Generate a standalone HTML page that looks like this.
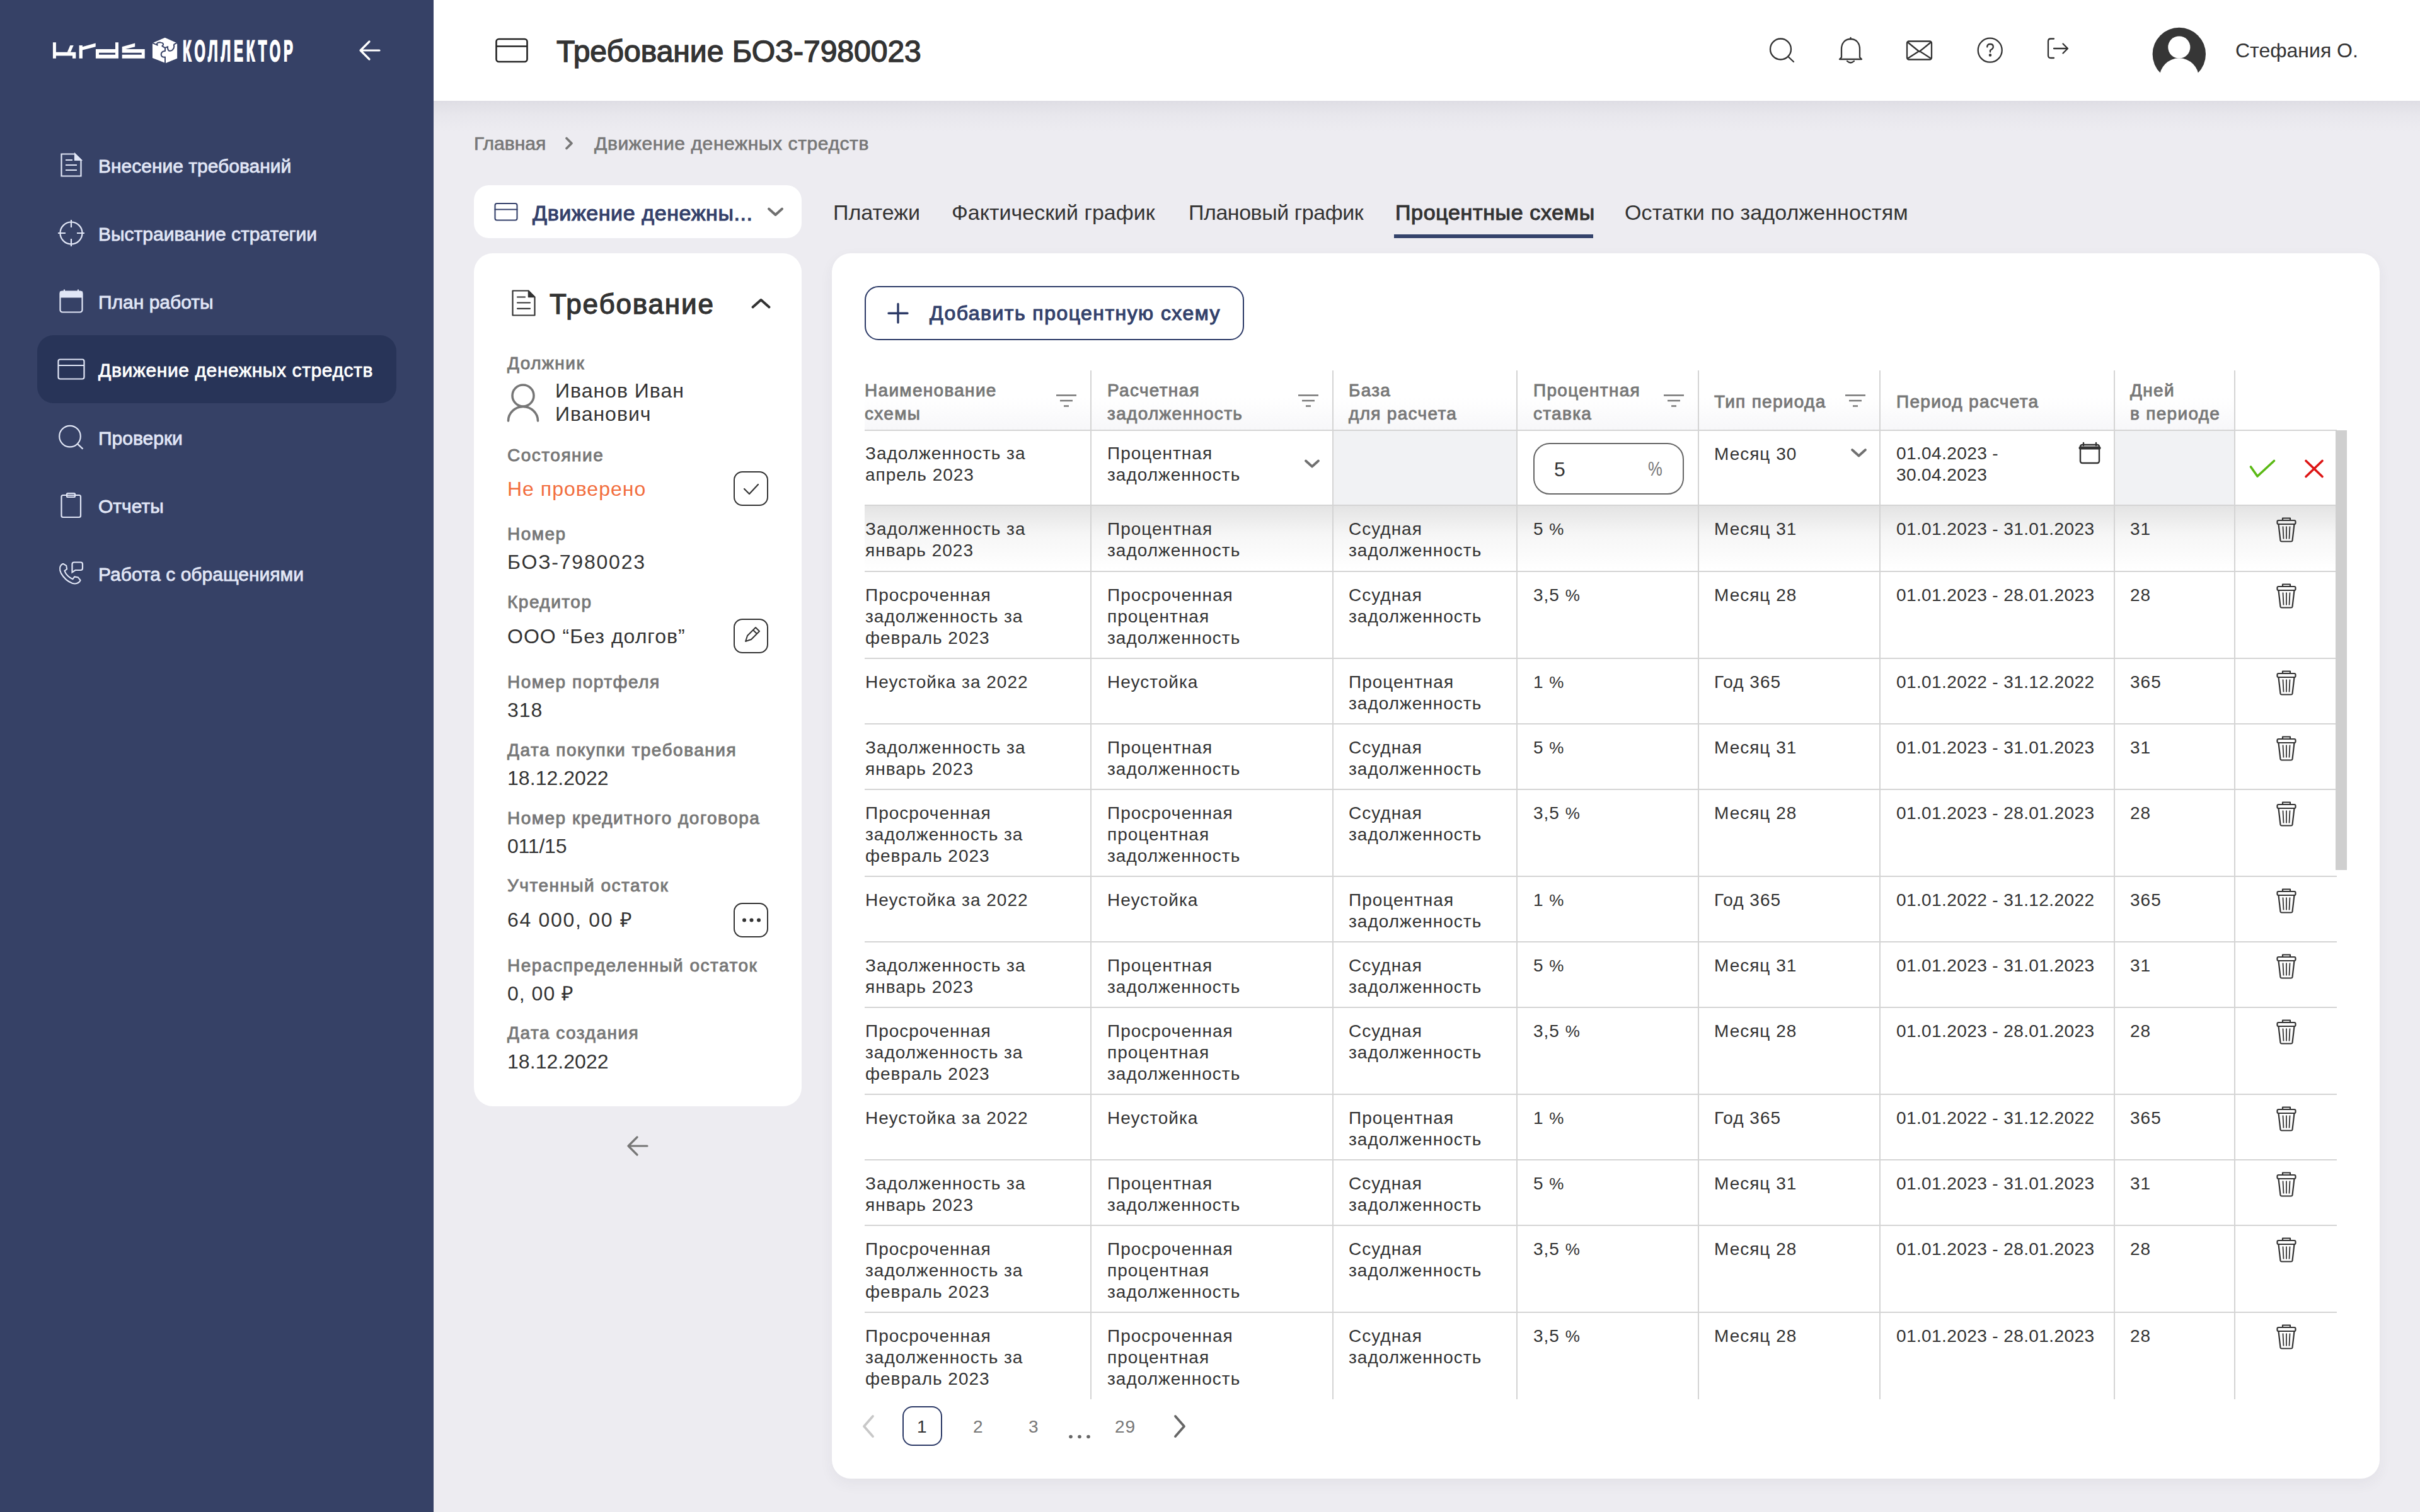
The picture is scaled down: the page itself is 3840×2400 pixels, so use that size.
<!DOCTYPE html><html><head><meta charset="utf-8"><style>
*{margin:0;padding:0;box-sizing:border-box}
html,body{width:3840px;height:2400px;overflow:hidden;background:#edecf1;font-family:"Liberation Sans",sans-serif;color:#333}
.t{position:absolute;white-space:nowrap}
.a{position:absolute}
#side{position:absolute;left:0;top:0;width:688px;height:2400px;background:#364166}
#hdr{position:absolute;left:688px;top:0;width:3152px;height:160px;background:#fff;}
.menu{color:#e1e6f6;-webkit-text-stroke:.8px #e1e6f6}
.act{position:absolute;left:59px;top:532px;width:570px;height:108px;border-radius:26px;background:#283458}
.card{position:absolute;background:#fff;border-radius:30px}
.lbl{color:#777;font-weight:normal;-webkit-text-stroke:.9px #777;letter-spacing:1.5px}
.val{color:#333;letter-spacing:1px}
.ib{position:absolute;width:55px;height:55px;border:2px solid #333;border-radius:14px}
.tab{color:#333}
.hd{color:#777;font-weight:normal;-webkit-text-stroke:.9px #777;letter-spacing:1.3px}
.cell{color:#333;letter-spacing:1px}
.vl{position:absolute;width:2px;background:#d4d4d4}
.hl{position:absolute;height:2px;background:#d4d4d4}
svg{position:absolute;overflow:visible}
@media (max-width:2600px){html{zoom:.5}}
</style></head><body>
<div id="side">
<svg style="left:0;top:0" width="688" height="160" viewBox="0 0 688 160">
<g transform="translate(78,55) scale(0.066116)" fill="#fff">
<path d="M90 185H165V420H640V570H560V505H165V570H90Z"/>
<path d="M435 420H515L585 258H505Z"/>
<path d="M720 258H800V290L1115 205V290L800 372V570H720Z"/>
<path d="M1590 185H1663V570H1118V348H1588V435H1195V480H1588V185Z" fill-rule="evenodd"/>
<path d="M1750 290L2060 205V290L1830 348H2295V570H1750V480H2220V435H1750Z"/>
</g>
<g transform="translate(236,55) scale(0.099177)" fill="#fff">
<path d="M260 48L440 128L455 150V380L270 455L60 372V150L78 125Z"/>
</g>
<g transform="translate(236,55) scale(0.099177)" fill="none" stroke="#364166" stroke-width="20" stroke-linejoin="round">
<path d="M70 138L140 168Q118 140 150 128Q190 118 225 138Q245 160 215 182Q230 196 262 210L305 192Q295 225 320 255Q350 268 380 245Q410 215 405 178Q395 160 420 148L445 135"/>
<path d="M262 210V262Q225 262 205 290Q188 330 215 352Q235 366 262 358V460"/>
</g>
<text transform="translate(290,97) scale(0.475,1)" x="0" y="0" fill="#fff" font-family="Liberation Sans" font-weight="bold" font-size="47" textLength="368" lengthAdjust="spacing" stroke="#fff" stroke-width="2.2" style="text-rendering:geometricPrecision">КОЛЛЕКТОР</text>
<path d="M602 80H572M586 66L572 80L586 94" stroke="#fff" stroke-width="3.2" fill="none" stroke-linecap="round" stroke-linejoin="round"/>
</svg>
<div class="act"></div>
<div class="t menu" style="left:156px;top:245.6px;font-size:30px;line-height:36px;">Внесение требований</div>
<div class="t menu" style="left:156px;top:353.6px;font-size:30px;line-height:36px;">Выстраивание стратегии</div>
<div class="t menu" style="left:156px;top:461.6px;font-size:30px;line-height:36px;">План работы</div>
<div class="t menu" style="left:156px;top:569.6px;font-size:30px;line-height:36px;color:#fff;-webkit-text-stroke:.8px #fff;letter-spacing:.6px">Движение денежных стредств</div>
<div class="t menu" style="left:156px;top:677.6px;font-size:30px;line-height:36px;">Проверки</div>
<div class="t menu" style="left:156px;top:785.6px;font-size:30px;line-height:36px;">Отчеты</div>
<div class="t menu" style="left:156px;top:893.6px;font-size:30px;line-height:36px;">Работа с обращениями</div>
<svg style="left:0;top:0" width="688" height="1000" viewBox="0 0 688 1000" fill="none" stroke="#e1e6f6" stroke-width="2.2">
<path d="M97.5 244.5H119L128.5 254V279.5H97.5Z"/><path d="M119 244.5L128.5 254H119Z" fill="#e1e6f6"/><path d="M104 254H115M104 262H122M104 270H122"/>
<circle cx="113" cy="370" r="17.5"/><path d="M113 349V361M113 379V391M92 370H104M122 370H134"/>
<rect x="95.5" y="462.5" width="35" height="33" rx="3.5"/><path d="M96 463.5H130V471.5H96Z" fill="#e1e6f6"/><path d="M102 459.5V463M124 459.5V463"/>
<rect x="92.5" y="570.5" width="41" height="31" rx="3"/><path d="M92.5 580H133.5"/>
<circle cx="111" cy="692.6" r="16.8"/><path d="M123 704.6L131.5 712.6"/>
<rect x="97.5" y="786" width="30.5" height="35" rx="2.5"/><rect x="106" y="783" width="13" height="6" rx="1.5"/>
<g transform="translate(95,895) scale(0.93) translate(-95,-895)"><path d="M100 895C94 898 94 905 97 911C101 918 108 925 116 928C122 930 128 928 130 923L126 918L120 917L117 921C111 919 105 913 103 907L107 904L106 898L101 895Z"/></g><path d="M117.5 892.5H128Q131 892.5 131 895.5V902Q131 905 128 905H119.5L114.5 908.5V895.5Q114.5 892.5 117.5 892.5Z"/>
</svg>
</div>
<div id="hdr"></div>
<div class="a" style="left:688px;top:160px;width:3152px;height:50px;background:linear-gradient(rgba(20,20,50,.065),rgba(20,20,50,.025) 45%,rgba(20,20,50,0))"></div>
<svg style="left:0;top:0" width="3840" height="160" viewBox="0 0 3840 160" fill="none" stroke="#222" stroke-width="2.6">
<rect x="787.5" y="62" width="49" height="36" rx="4"/><path d="M787.5 73.5H836.5"/>
</svg>
<div class="t " style="left:883px;top:53.4px;font-size:48px;line-height:58px;color:#333;-webkit-text-stroke:1.4px #333">Требование БОЗ-7980023</div>
<svg style="left:0;top:0" width="3840" height="160" viewBox="0 0 3840 160" fill="none" stroke="#333" stroke-width="2.3" stroke-linecap="round" stroke-linejoin="round">
<circle cx="2825.5" cy="78" r="16.5"/><path d="M2838 90.5L2846 98"/>
<path d="M2936.5 62C2927 62 2922 69 2922 78V91L2919 94H2954L2951 91V78C2951 69 2946 62 2936.5 62Z"/><path d="M2936.5 60V62"/><path d="M2931 97Q2936.5 102 2942 97"/>
<rect x="3026" y="65.5" width="39" height="29" rx="3"/><path d="M3027 67L3045.5 82L3064 67M3027.5 92.5L3043 82.5M3063.5 92.5L3048 82.5"/>
<circle cx="3157.7" cy="79.7" r="19"/><path d="M3153.2 74.5Q3153.2 70 3158 70Q3162.8 70 3162.8 74.3Q3162.8 77.5 3158 79.8V82.5"/><circle cx="3158" cy="87.5" r="1.1" fill="#333"/>
<path d="M3259 61.5H3254Q3250 61.5 3250 65.5V88Q3250 92 3254 92H3259"/><path d="M3259 77H3281M3273.5 69.5L3281 77L3273.5 84.5"/>
</svg>
<svg style="left:0;top:0" width="3840" height="160" viewBox="0 0 3840 160">
<defs><clipPath id="avc"><circle cx="3457.8" cy="86" r="42.2"/></clipPath></defs>
<circle cx="3457.8" cy="86" r="42.2" fill="#363636"/>
<circle cx="3457.8" cy="75" r="17.6" fill="#fff"/><circle cx="3457.8" cy="123.5" r="31.2" fill="#fff"/><rect x="3410" y="129" width="96" height="20" fill="#fff"/>
</svg>
<div class="t " style="left:3547px;top:60.9px;font-size:32px;line-height:38px;color:#333">Стефания О.</div>
<div class="t lbl" style="left:752px;top:209.9px;font-size:30px;line-height:36px;font-weight:normal;-webkit-text-stroke:.7px #777;letter-spacing:0">Главная</div>
<svg style="left:0;top:0" width="3840" height="400" viewBox="0 0 3840 400" fill="none" stroke="#777" stroke-width="2.8" stroke-linecap="round" stroke-linejoin="round">
<path d="M899 219.5L907 227.5L899 235.5" stroke-width="3.8"/></svg>
<div class="t lbl" style="left:943px;top:209.9px;font-size:30px;line-height:36px;font-weight:normal;-webkit-text-stroke:.7px #777;letter-spacing:.6px">Движение денежных стредств</div>
<div class="card" style="left:752px;top:294px;width:520px;height:84px;border-radius:24px"></div>
<svg style="left:0;top:0" width="3840" height="400" viewBox="0 0 3840 400" fill="none" stroke="#34406a" stroke-width="2.1" stroke-linecap="round" stroke-linejoin="round">
<rect x="785.5" y="323" width="35" height="26.5" rx="3"/><path d="M785.5 332.5H820.5"/>
<path d="M1220 331.5L1230.5 341L1241 331.5" stroke="#707070" stroke-width="4"/></svg>
<div class="t " style="left:845px;top:317.7px;font-size:34px;line-height:41px;color:#34406a;-webkit-text-stroke:1.1px #34406a;letter-spacing:.6px">Движение денежны...</div>
<div class="t " style="left:1322px;top:316.7px;font-size:34px;line-height:41px;color:#333;letter-spacing:0px">Платежи</div>
<div class="t " style="left:1510px;top:316.7px;font-size:34px;line-height:41px;color:#333;letter-spacing:0px">Фактический график</div>
<div class="t " style="left:1886px;top:316.7px;font-size:34px;line-height:41px;color:#333;letter-spacing:-0.45px">Плановый график</div>
<div class="t " style="left:2214px;top:316.7px;font-size:34px;line-height:41px;color:#333;-webkit-text-stroke:1.1px #333;letter-spacing:0.65px">Процентные схемы</div>
<div class="t " style="left:2578px;top:316.7px;font-size:34px;line-height:41px;color:#333;letter-spacing:0.1px">Остатки по задолженностям</div>
<div class="a" style="left:2212px;top:372px;width:316px;height:6px;background:#34436b"></div>
<div class="card" style="left:752px;top:402px;width:520px;height:1354px"></div>
<svg style="left:0;top:0" width="3840" height="2400" viewBox="0 0 3840 2400" fill="none" stroke="#333" stroke-width="2.4" stroke-linecap="round" stroke-linejoin="round">
<path d="M813.5 461.5H838.5L848.5 471.5V500.5H813.5Z" stroke-width="2.2"/><path d="M838.5 461.5L848.5 471.5H838.5Z" fill="#333" stroke-width="1.5"/><path d="M821 471.5H833M821 480.5H841M821 489.8H841" stroke-width="2.2"/>
<path d="M1194.5 487.5L1207.5 476L1220.5 487.5" stroke-width="4"/>
<circle cx="830" cy="628" r="17" stroke="#777" stroke-width="3.6"/><path d="M806.5 668A23.5 22.5 0 0 1 853.5 668" stroke="#777" stroke-width="3.6"/>
<path d="M1181 776L1189 784L1203 769" stroke-width="2.2"/>
<path d="M1183 1018L1186 1009L1199 996L1205 1002L1192 1015Z M1195 1000L1201 1006" stroke-width="2"/>
<circle cx="1181" cy="1460.5" r="3" fill="#333" stroke="none"/><circle cx="1192.5" cy="1460.5" r="3" fill="#333" stroke="none"/><circle cx="1204" cy="1460.5" r="3" fill="#333" stroke="none"/>
<path d="M1027 1819H997M1011 1805L997 1819L1011 1833" stroke="#777" stroke-width="3.2"/>
</svg>
<div class="t " style="left:872px;top:456.3px;font-size:44px;line-height:53px;color:#333;-webkit-text-stroke:1.3px #333;letter-spacing:1.85px">Требование</div>
<div class="ib" style="left:1164px;top:748px"></div>
<div class="ib" style="left:1164px;top:982px"></div>
<div class="ib" style="left:1164px;top:1433px"></div>
<div class="t lbl" style="left:805px;top:560.3px;font-size:28px;line-height:34px;">Должник</div>
<div class="t val" style="left:881px;top:602.4px;font-size:32px;line-height:37px;">Иванов Иван<br>Иванович</div>
<div class="t lbl" style="left:805px;top:706.3px;font-size:28px;line-height:34px;">Состояние</div>
<div class="t val" style="left:805px;top:756.9px;font-size:32px;line-height:38px;color:#f26d3d">Не проверено</div>
<div class="t lbl" style="left:805px;top:831.3px;font-size:28px;line-height:34px;">Номер</div>
<div class="t val" style="left:805px;top:872.9px;font-size:32px;line-height:38px;color:#333;letter-spacing:1.8px">БОЗ-7980023</div>
<div class="t lbl" style="left:805px;top:939.3px;font-size:28px;line-height:34px;">Кредитор</div>
<div class="t val" style="left:805px;top:990.9px;font-size:32px;line-height:38px;color:#333">ООО “Без долгов”</div>
<div class="t lbl" style="left:805px;top:1066.3px;font-size:28px;line-height:34px;">Номер портфеля</div>
<div class="t val" style="left:805px;top:1107.9px;font-size:32px;line-height:38px;color:#333">318</div>
<div class="t lbl" style="left:805px;top:1173.8px;font-size:28px;line-height:34px;">Дата покупки требования</div>
<div class="t val" style="left:805px;top:1215.9px;font-size:32px;line-height:38px;color:#333;letter-spacing:0.05px">18.12.2022</div>
<div class="t lbl" style="left:805px;top:1282.3px;font-size:28px;line-height:34px;">Номер кредитного договора</div>
<div class="t val" style="left:805px;top:1323.9px;font-size:32px;line-height:38px;color:#333;letter-spacing:-0.2px">011/15</div>
<div class="t lbl" style="left:805px;top:1388.9px;font-size:28px;line-height:34px;">Учтенный остаток</div>
<div class="t val" style="left:805px;top:1440.9px;font-size:32px;line-height:38px;color:#333;letter-spacing:1.7px">64 000, 00 ₽</div>
<div class="t lbl" style="left:805px;top:1515.8px;font-size:28px;line-height:34px;">Нераспределенный остаток</div>
<div class="t val" style="left:805px;top:1557.9px;font-size:32px;line-height:38px;color:#333">0, 00 ₽</div>
<div class="t lbl" style="left:805px;top:1623.3px;font-size:28px;line-height:34px;">Дата создания</div>
<div class="t val" style="left:805px;top:1665.9px;font-size:32px;line-height:38px;color:#333;letter-spacing:0.05px">18.12.2022</div>
<div class="card" style="left:1320px;top:402px;width:2456px;height:1945px;box-shadow:0 8px 22px rgba(50,50,80,.055)"></div>
<div class="a" style="left:1372px;top:454px;width:602px;height:86px;border:2px solid #2b3966;border-radius:22px"></div>
<svg style="left:0;top:0" width="3840" height="600" viewBox="0 0 3840 600" fill="none" stroke="#2b3966" stroke-width="2.8" stroke-linecap="round">
<path d="M1425 482.5V512M1410 497.2H1440" stroke-width="3.4"/></svg>
<div class="t " style="left:1475px;top:477.9px;font-size:32px;line-height:38px;color:#33416b;-webkit-text-stroke:1.1px #33416b;letter-spacing:1.45px">Добавить процентную схему</div>
<div class="a" style="left:1372px;top:588px;width:2174px;height:95px;background:linear-gradient(#fff 45%,#f7f7f9)"></div>
<div class="t hd" style="left:1372px;top:600.8px;font-size:28px;line-height:37px;">Наименование<br>схемы</div>
<svg style="left:0;top:0" width="3840" height="700" viewBox="0 0 3840 700" fill="none" stroke="#777" stroke-width="2.6"><path d="M1676 627.5H1708M1682 636H1702M1688 644.5H1696"/></svg>
<div class="t hd" style="left:1757px;top:600.8px;font-size:28px;line-height:37px;">Расчетная<br>задолженность</div>
<svg style="left:0;top:0" width="3840" height="700" viewBox="0 0 3840 700" fill="none" stroke="#777" stroke-width="2.6"><path d="M2060 627.5H2092M2066 636H2086M2072 644.5H2080"/></svg>
<div class="t hd" style="left:2140px;top:600.8px;font-size:28px;line-height:37px;">База<br>для расчета</div>
<div class="t hd" style="left:2433px;top:600.8px;font-size:28px;line-height:37px;">Процентная<br>ставка</div>
<svg style="left:0;top:0" width="3840" height="700" viewBox="0 0 3840 700" fill="none" stroke="#777" stroke-width="2.6"><path d="M2640 627.5H2672M2646 636H2666M2652 644.5H2660"/></svg>
<div class="t hd" style="left:2720px;top:619.3px;font-size:28px;line-height:37px;">Тип периода</div>
<svg style="left:0;top:0" width="3840" height="700" viewBox="0 0 3840 700" fill="none" stroke="#777" stroke-width="2.6"><path d="M2928 627.5H2960M2934 636H2954M2940 644.5H2948"/></svg>
<div class="t hd" style="left:3009px;top:619.3px;font-size:28px;line-height:37px;">Период расчета</div>
<div class="t hd" style="left:3380px;top:600.8px;font-size:28px;line-height:37px;">Дней<br>в периоде</div>
<div class="a" style="left:2115px;top:684px;width:292px;height:118px;background:#f1f2f4"></div>
<div class="a" style="left:3355px;top:684px;width:191px;height:118px;background:#f1f2f4"></div>
<div class="a" style="left:1372px;top:802px;width:2336px;height:104px;background:linear-gradient(rgba(0,0,0,.11),rgba(0,0,0,.035) 45%,rgba(0,0,0,0))"></div>
<div class="t cell" style="left:1373px;top:703.0px;font-size:28px;line-height:34px;">Задолженность за<br>апрель 2023</div>
<div class="t cell" style="left:1757px;top:703.0px;font-size:28px;line-height:34px;">Процентная<br>задолженность</div>
<div class="a" style="left:2433px;top:703px;width:239px;height:82px;border:2px solid #666;border-radius:26px"></div>
<div class="t cell" style="left:2466px;top:725.9px;font-size:32px;line-height:38px;">5</div>
<div class="t cell" style="left:2615px;top:725.4px;font-size:32px;line-height:38px;color:#777;letter-spacing:0;transform:scaleX(.8);transform-origin:0 0">%</div>
<div class="t cell" style="left:2720px;top:704.0px;font-size:28px;line-height:34px;">Месяц 30</div>
<div class="t cell" style="left:3009px;top:702.9px;font-size:28px;line-height:34px;letter-spacing:.4px">01.04.2023 -<br>30.04.2023</div>
<svg style="left:0;top:0" width="3840" height="900" viewBox="0 0 3840 900" fill="none" stroke="#555" stroke-width="3" stroke-linecap="round" stroke-linejoin="round">
<path d="M2072 731.5L2082 740.5L2092 731.5" stroke="#707070" stroke-width="3.8"/><path d="M2939 714L2949.5 723.5L2960 714" stroke="#707070" stroke-width="3.8"/>
<rect x="3301" y="706" width="30" height="29" rx="3" stroke="#333" stroke-width="2.4"/><path d="M3301 711H3331" stroke="#333" stroke-width="5"/><path d="M3306 703V707M3326 703V707" stroke="#333" stroke-width="2.4"/>
<path d="M3571.5 741L3582 756L3608.5 731.5" stroke="#5ab914" stroke-width="3.6"/>
<path d="M3659 731.5L3685 756.5M3685 731.5L3659 756.5" stroke="#dd1515" stroke-width="3.6"/>
</svg>
<div class="t cell" style="left:1373px;top:823.0px;font-size:28px;line-height:34px;">Задолженность за<br>январь 2023</div>
<div class="t cell" style="left:1757px;top:823.0px;font-size:28px;line-height:34px;">Процентная<br>задолженность</div>
<div class="t cell" style="left:2140px;top:823.0px;font-size:28px;line-height:34px;">Ссудная<br>задолженность</div>
<div class="t cell" style="left:2433px;top:823.0px;font-size:28px;line-height:34px;">5 <span style="font-size:26px">%</span></div>
<div class="t cell" style="left:2720px;top:823.0px;font-size:28px;line-height:34px;">Месяц 31</div>
<div class="t cell" style="left:3009px;top:823.0px;font-size:28px;line-height:34px;letter-spacing:.4px">01.01.2023 - 31.01.2023</div>
<div class="t cell" style="left:3380px;top:823.0px;font-size:28px;line-height:34px;">31</div>
<div class="t cell" style="left:1373px;top:928.0px;font-size:28px;line-height:34px;">Просроченная<br>задолженность за<br>февраль 2023</div>
<div class="t cell" style="left:1757px;top:928.0px;font-size:28px;line-height:34px;">Просроченная<br>процентная<br>задолженность</div>
<div class="t cell" style="left:2140px;top:928.0px;font-size:28px;line-height:34px;">Ссудная<br>задолженность</div>
<div class="t cell" style="left:2433px;top:928.0px;font-size:28px;line-height:34px;">3,5 <span style="font-size:26px">%</span></div>
<div class="t cell" style="left:2720px;top:928.0px;font-size:28px;line-height:34px;">Месяц 28</div>
<div class="t cell" style="left:3009px;top:928.0px;font-size:28px;line-height:34px;letter-spacing:.4px">01.01.2023 - 28.01.2023</div>
<div class="t cell" style="left:3380px;top:928.0px;font-size:28px;line-height:34px;">28</div>
<div class="t cell" style="left:1373px;top:1066.0px;font-size:28px;line-height:34px;">Неустойка за 2022</div>
<div class="t cell" style="left:1757px;top:1066.0px;font-size:28px;line-height:34px;">Неустойка</div>
<div class="t cell" style="left:2140px;top:1066.0px;font-size:28px;line-height:34px;">Процентная<br>задолженность</div>
<div class="t cell" style="left:2433px;top:1066.0px;font-size:28px;line-height:34px;">1 <span style="font-size:26px">%</span></div>
<div class="t cell" style="left:2720px;top:1066.0px;font-size:28px;line-height:34px;">Год 365</div>
<div class="t cell" style="left:3009px;top:1066.0px;font-size:28px;line-height:34px;letter-spacing:.4px">01.01.2022 - 31.12.2022</div>
<div class="t cell" style="left:3380px;top:1066.0px;font-size:28px;line-height:34px;">365</div>
<div class="t cell" style="left:1373px;top:1170.0px;font-size:28px;line-height:34px;">Задолженность за<br>январь 2023</div>
<div class="t cell" style="left:1757px;top:1170.0px;font-size:28px;line-height:34px;">Процентная<br>задолженность</div>
<div class="t cell" style="left:2140px;top:1170.0px;font-size:28px;line-height:34px;">Ссудная<br>задолженность</div>
<div class="t cell" style="left:2433px;top:1170.0px;font-size:28px;line-height:34px;">5 <span style="font-size:26px">%</span></div>
<div class="t cell" style="left:2720px;top:1170.0px;font-size:28px;line-height:34px;">Месяц 31</div>
<div class="t cell" style="left:3009px;top:1170.0px;font-size:28px;line-height:34px;letter-spacing:.4px">01.01.2023 - 31.01.2023</div>
<div class="t cell" style="left:3380px;top:1170.0px;font-size:28px;line-height:34px;">31</div>
<div class="t cell" style="left:1373px;top:1274.0px;font-size:28px;line-height:34px;">Просроченная<br>задолженность за<br>февраль 2023</div>
<div class="t cell" style="left:1757px;top:1274.0px;font-size:28px;line-height:34px;">Просроченная<br>процентная<br>задолженность</div>
<div class="t cell" style="left:2140px;top:1274.0px;font-size:28px;line-height:34px;">Ссудная<br>задолженность</div>
<div class="t cell" style="left:2433px;top:1274.0px;font-size:28px;line-height:34px;">3,5 <span style="font-size:26px">%</span></div>
<div class="t cell" style="left:2720px;top:1274.0px;font-size:28px;line-height:34px;">Месяц 28</div>
<div class="t cell" style="left:3009px;top:1274.0px;font-size:28px;line-height:34px;letter-spacing:.4px">01.01.2023 - 28.01.2023</div>
<div class="t cell" style="left:3380px;top:1274.0px;font-size:28px;line-height:34px;">28</div>
<div class="t cell" style="left:1373px;top:1412.0px;font-size:28px;line-height:34px;">Неустойка за 2022</div>
<div class="t cell" style="left:1757px;top:1412.0px;font-size:28px;line-height:34px;">Неустойка</div>
<div class="t cell" style="left:2140px;top:1412.0px;font-size:28px;line-height:34px;">Процентная<br>задолженность</div>
<div class="t cell" style="left:2433px;top:1412.0px;font-size:28px;line-height:34px;">1 <span style="font-size:26px">%</span></div>
<div class="t cell" style="left:2720px;top:1412.0px;font-size:28px;line-height:34px;">Год 365</div>
<div class="t cell" style="left:3009px;top:1412.0px;font-size:28px;line-height:34px;letter-spacing:.4px">01.01.2022 - 31.12.2022</div>
<div class="t cell" style="left:3380px;top:1412.0px;font-size:28px;line-height:34px;">365</div>
<div class="t cell" style="left:1373px;top:1516.0px;font-size:28px;line-height:34px;">Задолженность за<br>январь 2023</div>
<div class="t cell" style="left:1757px;top:1516.0px;font-size:28px;line-height:34px;">Процентная<br>задолженность</div>
<div class="t cell" style="left:2140px;top:1516.0px;font-size:28px;line-height:34px;">Ссудная<br>задолженность</div>
<div class="t cell" style="left:2433px;top:1516.0px;font-size:28px;line-height:34px;">5 <span style="font-size:26px">%</span></div>
<div class="t cell" style="left:2720px;top:1516.0px;font-size:28px;line-height:34px;">Месяц 31</div>
<div class="t cell" style="left:3009px;top:1516.0px;font-size:28px;line-height:34px;letter-spacing:.4px">01.01.2023 - 31.01.2023</div>
<div class="t cell" style="left:3380px;top:1516.0px;font-size:28px;line-height:34px;">31</div>
<div class="t cell" style="left:1373px;top:1620.0px;font-size:28px;line-height:34px;">Просроченная<br>задолженность за<br>февраль 2023</div>
<div class="t cell" style="left:1757px;top:1620.0px;font-size:28px;line-height:34px;">Просроченная<br>процентная<br>задолженность</div>
<div class="t cell" style="left:2140px;top:1620.0px;font-size:28px;line-height:34px;">Ссудная<br>задолженность</div>
<div class="t cell" style="left:2433px;top:1620.0px;font-size:28px;line-height:34px;">3,5 <span style="font-size:26px">%</span></div>
<div class="t cell" style="left:2720px;top:1620.0px;font-size:28px;line-height:34px;">Месяц 28</div>
<div class="t cell" style="left:3009px;top:1620.0px;font-size:28px;line-height:34px;letter-spacing:.4px">01.01.2023 - 28.01.2023</div>
<div class="t cell" style="left:3380px;top:1620.0px;font-size:28px;line-height:34px;">28</div>
<div class="t cell" style="left:1373px;top:1758.0px;font-size:28px;line-height:34px;">Неустойка за 2022</div>
<div class="t cell" style="left:1757px;top:1758.0px;font-size:28px;line-height:34px;">Неустойка</div>
<div class="t cell" style="left:2140px;top:1758.0px;font-size:28px;line-height:34px;">Процентная<br>задолженность</div>
<div class="t cell" style="left:2433px;top:1758.0px;font-size:28px;line-height:34px;">1 <span style="font-size:26px">%</span></div>
<div class="t cell" style="left:2720px;top:1758.0px;font-size:28px;line-height:34px;">Год 365</div>
<div class="t cell" style="left:3009px;top:1758.0px;font-size:28px;line-height:34px;letter-spacing:.4px">01.01.2022 - 31.12.2022</div>
<div class="t cell" style="left:3380px;top:1758.0px;font-size:28px;line-height:34px;">365</div>
<div class="t cell" style="left:1373px;top:1862.0px;font-size:28px;line-height:34px;">Задолженность за<br>январь 2023</div>
<div class="t cell" style="left:1757px;top:1862.0px;font-size:28px;line-height:34px;">Процентная<br>задолженность</div>
<div class="t cell" style="left:2140px;top:1862.0px;font-size:28px;line-height:34px;">Ссудная<br>задолженность</div>
<div class="t cell" style="left:2433px;top:1862.0px;font-size:28px;line-height:34px;">5 <span style="font-size:26px">%</span></div>
<div class="t cell" style="left:2720px;top:1862.0px;font-size:28px;line-height:34px;">Месяц 31</div>
<div class="t cell" style="left:3009px;top:1862.0px;font-size:28px;line-height:34px;letter-spacing:.4px">01.01.2023 - 31.01.2023</div>
<div class="t cell" style="left:3380px;top:1862.0px;font-size:28px;line-height:34px;">31</div>
<div class="t cell" style="left:1373px;top:1966.0px;font-size:28px;line-height:34px;">Просроченная<br>задолженность за<br>февраль 2023</div>
<div class="t cell" style="left:1757px;top:1966.0px;font-size:28px;line-height:34px;">Просроченная<br>процентная<br>задолженность</div>
<div class="t cell" style="left:2140px;top:1966.0px;font-size:28px;line-height:34px;">Ссудная<br>задолженность</div>
<div class="t cell" style="left:2433px;top:1966.0px;font-size:28px;line-height:34px;">3,5 <span style="font-size:26px">%</span></div>
<div class="t cell" style="left:2720px;top:1966.0px;font-size:28px;line-height:34px;">Месяц 28</div>
<div class="t cell" style="left:3009px;top:1966.0px;font-size:28px;line-height:34px;letter-spacing:.4px">01.01.2023 - 28.01.2023</div>
<div class="t cell" style="left:3380px;top:1966.0px;font-size:28px;line-height:34px;">28</div>
<div class="t cell" style="left:1373px;top:2104.0px;font-size:28px;line-height:34px;">Просроченная<br>задолженность за<br>февраль 2023</div>
<div class="t cell" style="left:1757px;top:2104.0px;font-size:28px;line-height:34px;">Просроченная<br>процентная<br>задолженность</div>
<div class="t cell" style="left:2140px;top:2104.0px;font-size:28px;line-height:34px;">Ссудная<br>задолженность</div>
<div class="t cell" style="left:2433px;top:2104.0px;font-size:28px;line-height:34px;">3,5 <span style="font-size:26px">%</span></div>
<div class="t cell" style="left:2720px;top:2104.0px;font-size:28px;line-height:34px;">Месяц 28</div>
<div class="t cell" style="left:3009px;top:2104.0px;font-size:28px;line-height:34px;letter-spacing:.4px">01.01.2023 - 28.01.2023</div>
<div class="t cell" style="left:3380px;top:2104.0px;font-size:28px;line-height:34px;">28</div>
<svg style="left:0;top:0" width="3840" height="2400" viewBox="0 0 3840 2400" fill="none" stroke="#333" stroke-width="2.2" stroke-linejoin="round"><rect x="3613.5" y="826" width="29" height="6" rx="2"/><path d="M3622 826V822.5H3634V826"/><path d="M3615.5 832L3618.5 858Q3619 859.5 3620.5 859.5H3635.5Q3637 859.5 3637.5 858L3640.5 832"/><path d="M3622.5 835.5L3623.5 855.5M3628 835.5V855.5M3633.5 835.5L3632.5 855.5" stroke-width="1.8"/><rect x="3613.5" y="931" width="29" height="6" rx="2"/><path d="M3622 931V927.5H3634V931"/><path d="M3615.5 937L3618.5 963Q3619 964.5 3620.5 964.5H3635.5Q3637 964.5 3637.5 963L3640.5 937"/><path d="M3622.5 940.5L3623.5 960.5M3628 940.5V960.5M3633.5 940.5L3632.5 960.5" stroke-width="1.8"/><rect x="3613.5" y="1069" width="29" height="6" rx="2"/><path d="M3622 1069V1065.5H3634V1069"/><path d="M3615.5 1075L3618.5 1101Q3619 1102.5 3620.5 1102.5H3635.5Q3637 1102.5 3637.5 1101L3640.5 1075"/><path d="M3622.5 1078.5L3623.5 1098.5M3628 1078.5V1098.5M3633.5 1078.5L3632.5 1098.5" stroke-width="1.8"/><rect x="3613.5" y="1173" width="29" height="6" rx="2"/><path d="M3622 1173V1169.5H3634V1173"/><path d="M3615.5 1179L3618.5 1205Q3619 1206.5 3620.5 1206.5H3635.5Q3637 1206.5 3637.5 1205L3640.5 1179"/><path d="M3622.5 1182.5L3623.5 1202.5M3628 1182.5V1202.5M3633.5 1182.5L3632.5 1202.5" stroke-width="1.8"/><rect x="3613.5" y="1277" width="29" height="6" rx="2"/><path d="M3622 1277V1273.5H3634V1277"/><path d="M3615.5 1283L3618.5 1309Q3619 1310.5 3620.5 1310.5H3635.5Q3637 1310.5 3637.5 1309L3640.5 1283"/><path d="M3622.5 1286.5L3623.5 1306.5M3628 1286.5V1306.5M3633.5 1286.5L3632.5 1306.5" stroke-width="1.8"/><rect x="3613.5" y="1415" width="29" height="6" rx="2"/><path d="M3622 1415V1411.5H3634V1415"/><path d="M3615.5 1421L3618.5 1447Q3619 1448.5 3620.5 1448.5H3635.5Q3637 1448.5 3637.5 1447L3640.5 1421"/><path d="M3622.5 1424.5L3623.5 1444.5M3628 1424.5V1444.5M3633.5 1424.5L3632.5 1444.5" stroke-width="1.8"/><rect x="3613.5" y="1519" width="29" height="6" rx="2"/><path d="M3622 1519V1515.5H3634V1519"/><path d="M3615.5 1525L3618.5 1551Q3619 1552.5 3620.5 1552.5H3635.5Q3637 1552.5 3637.5 1551L3640.5 1525"/><path d="M3622.5 1528.5L3623.5 1548.5M3628 1528.5V1548.5M3633.5 1528.5L3632.5 1548.5" stroke-width="1.8"/><rect x="3613.5" y="1623" width="29" height="6" rx="2"/><path d="M3622 1623V1619.5H3634V1623"/><path d="M3615.5 1629L3618.5 1655Q3619 1656.5 3620.5 1656.5H3635.5Q3637 1656.5 3637.5 1655L3640.5 1629"/><path d="M3622.5 1632.5L3623.5 1652.5M3628 1632.5V1652.5M3633.5 1632.5L3632.5 1652.5" stroke-width="1.8"/><rect x="3613.5" y="1761" width="29" height="6" rx="2"/><path d="M3622 1761V1757.5H3634V1761"/><path d="M3615.5 1767L3618.5 1793Q3619 1794.5 3620.5 1794.5H3635.5Q3637 1794.5 3637.5 1793L3640.5 1767"/><path d="M3622.5 1770.5L3623.5 1790.5M3628 1770.5V1790.5M3633.5 1770.5L3632.5 1790.5" stroke-width="1.8"/><rect x="3613.5" y="1865" width="29" height="6" rx="2"/><path d="M3622 1865V1861.5H3634V1865"/><path d="M3615.5 1871L3618.5 1897Q3619 1898.5 3620.5 1898.5H3635.5Q3637 1898.5 3637.5 1897L3640.5 1871"/><path d="M3622.5 1874.5L3623.5 1894.5M3628 1874.5V1894.5M3633.5 1874.5L3632.5 1894.5" stroke-width="1.8"/><rect x="3613.5" y="1969" width="29" height="6" rx="2"/><path d="M3622 1969V1965.5H3634V1969"/><path d="M3615.5 1975L3618.5 2001Q3619 2002.5 3620.5 2002.5H3635.5Q3637 2002.5 3637.5 2001L3640.5 1975"/><path d="M3622.5 1978.5L3623.5 1998.5M3628 1978.5V1998.5M3633.5 1978.5L3632.5 1998.5" stroke-width="1.8"/><rect x="3613.5" y="2107" width="29" height="6" rx="2"/><path d="M3622 2107V2103.5H3634V2107"/><path d="M3615.5 2113L3618.5 2139Q3619 2140.5 3620.5 2140.5H3635.5Q3637 2140.5 3637.5 2139L3640.5 2113"/><path d="M3622.5 2116.5L3623.5 2136.5M3628 2116.5V2136.5M3633.5 2116.5L3632.5 2136.5" stroke-width="1.8"/></svg>
<div class="hl" style="left:1372px;top:682px;width:2336px"></div>
<div class="hl" style="left:1372px;top:801px;width:2336px"></div>
<div class="hl" style="left:1372px;top:906px;width:2336px"></div>
<div class="hl" style="left:1372px;top:1044px;width:2336px"></div>
<div class="hl" style="left:1372px;top:1148px;width:2336px"></div>
<div class="hl" style="left:1372px;top:1252px;width:2336px"></div>
<div class="hl" style="left:1372px;top:1390px;width:2336px"></div>
<div class="hl" style="left:1372px;top:1494px;width:2336px"></div>
<div class="hl" style="left:1372px;top:1598px;width:2336px"></div>
<div class="hl" style="left:1372px;top:1736px;width:2336px"></div>
<div class="hl" style="left:1372px;top:1840px;width:2336px"></div>
<div class="hl" style="left:1372px;top:1944px;width:2336px"></div>
<div class="hl" style="left:1372px;top:2082px;width:2336px"></div>
<div class="vl" style="left:1730px;top:588px;height:1633px"></div>
<div class="vl" style="left:2114px;top:588px;height:1633px"></div>
<div class="vl" style="left:2406px;top:588px;height:1633px"></div>
<div class="vl" style="left:2694px;top:588px;height:1633px"></div>
<div class="vl" style="left:2982px;top:588px;height:1633px"></div>
<div class="vl" style="left:3354px;top:588px;height:1633px"></div>
<div class="vl" style="left:3545px;top:588px;height:1633px"></div>
<div class="a" style="left:3706px;top:683px;width:18px;height:698px;background:#cfcfcf"></div>
<svg style="left:0;top:0" width="3840" height="2400" viewBox="0 0 3840 2400" fill="none" stroke-width="3.2" stroke-linecap="round" stroke-linejoin="round">
<path d="M1385 2248L1371 2264L1385 2280" stroke="#c8c8c8" stroke-width="3.8"/>
<path d="M1865 2248L1879 2264L1865 2280" stroke="#666" stroke-width="3.8"/>
<circle cx="1699" cy="2280.5" r="2.8" fill="#666" stroke="none"/><circle cx="1713" cy="2280.5" r="2.8" fill="#666" stroke="none"/><circle cx="1727" cy="2280.5" r="2.8" fill="#666" stroke="none"/>
</svg>
<div class="a" style="left:1432px;top:2232px;width:63px;height:63px;border:2px solid #2b3966;border-radius:16px"></div>
<div class="t cell" style="left:1455px;top:2248.3px;font-size:28px;line-height:34px;">1</div>
<div class="t cell" style="left:1544px;top:2248.3px;font-size:28px;line-height:34px;color:#777">2</div>
<div class="t cell" style="left:1632px;top:2248.3px;font-size:28px;line-height:34px;color:#777">3</div>
<div class="t cell" style="left:1769px;top:2248.3px;font-size:28px;line-height:34px;color:#777">29</div>
</body></html>
